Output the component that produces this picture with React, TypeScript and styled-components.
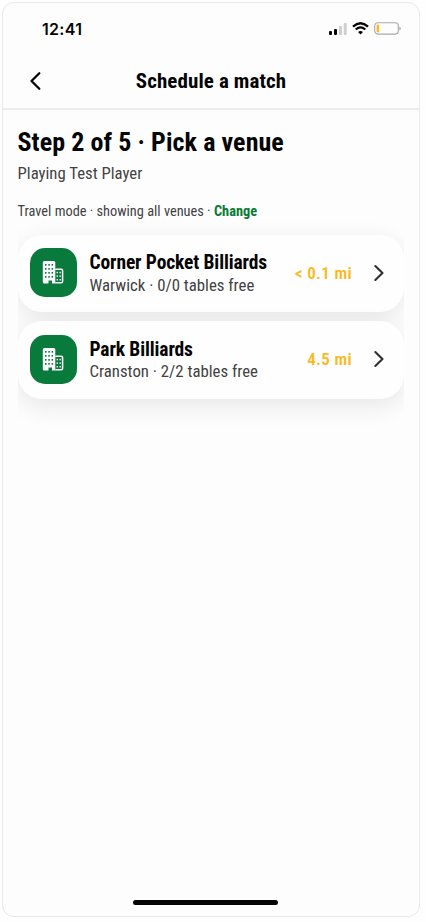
import React from "react";
import styled, { createGlobalStyle } from "styled-components";

const Global = createGlobalStyle`
  * { box-sizing: border-box; }
  body { margin: 0; background: #fefefe; font-family: "Roboto Condensed", Roboto, sans-serif; font-stretch: 75%; color: #050505; }
  h1, h2, h3, p { margin: 0; }
  button { border: 0; padding: 0; background: none; font: inherit; color: inherit; cursor: pointer; }
`;

const Page = styled.div`
  height: 922px;
  padding: 2px 6px 5px 2px;
`;

const Phone = styled.main`
  width: 418px;
  height: 915px;
  border: 1px solid #e9e9e9;
  border-radius: 12px;
  background: #fdfdfd;
  display: flex;
  flex-direction: column;
`;

const StatusBar = styled.div`
  height: 51px;
  padding: 0 18px 0 39px;
  display: flex;
  align-items: center;
  justify-content: space-between;
`;

const Clock = styled.span`
  font: 600 16px/20px Inter, sans-serif;
  letter-spacing: 0.3px;
`;

const StatusIcons = styled.div`
  display: flex;
  align-items: center;
  gap: 5px;
  svg { display: block; }
`;

const NavBar = styled.header`
  height: 56px;
  border-bottom: 2px solid #ececea;
  display: grid;
  grid-template-columns: 64px 1fr 64px;
  align-items: center;
`;

const BackButton = styled.button`
  display: flex;
  padding-left: 26px;
`;

const NavTitle = styled.h1`
  text-align: center;
  font-size: 21px;
  line-height: 26px;
  font-weight: 700;
  letter-spacing: 0.1px;
`;

const Content = styled.section`
  flex: 1;
  padding: 17px 15px 0 14.5px;
`;

const Heading = styled.h2`
  font-size: 26px;
  line-height: 30px;
  font-weight: 700;
  letter-spacing: 0.08px;
  white-space: nowrap;
`;

const Opponent = styled.p`
  margin-top: 6px;
  font-size: 16.75px;
  line-height: 20px;
  color: #424242;
`;

const TravelNote = styled.p`
  margin-top: 21px;
  font-size: 14.35px;
  line-height: 16px;
  color: #424242;
`;

const ChangeLink = styled.button`
  font-weight: 700;
  color: #087a35;
`;

const VenueList = styled.div`
  display: flex;
  flex-direction: column;
  gap: 9px;
  height: 225px;
  padding-top: 14.5px;
  overflow: hidden;
`;

const VenueCard = styled.button`
  flex: none;
  height: 77.5px;
  padding: 0 19px 1px 12px;
  display: flex;
  align-items: center;
  border-radius: 24px;
  background: #fefefe;
  box-shadow: 0 7px 24px rgba(0, 0, 0, 0.09);
  text-align: left;
`;

const VenueIcon = styled.span`
  width: 47.5px;
  height: 49px;
  border-radius: 15px;
  background: #087a3b;
  display: flex;
  align-items: center;
  justify-content: center;
`;

const VenueText = styled.span`
  flex: 1;
  margin-left: 12.5px;
  padding-top: 2px;
  display: flex;
  flex-direction: column;
  white-space: nowrap;
`;

const VenueName = styled.span`
  font-size: 19.5px;
  letter-spacing: -0.12px;
  line-height: 23.5px;
  font-weight: 700;
`;

const VenueDetail = styled.span`
  margin: -1px 0 1px;
  font-size: 16.8px;
  line-height: 22px;
  color: #424242;
`;

const Distance = styled.span`
  margin-right: 21px;
  font-size: 17px;
  line-height: 22px;
  font-weight: 650;
  letter-spacing: 0.35px;
  color: #fbb91d;
`;

const HomeIndicator = styled.div`
  align-self: center;
  width: 145px;
  height: 5px;
  margin: 0 10.5px 11.5px 0;
  border-radius: 3px;
  background: #050505;
`;

const Buildings = () => (
  <svg width="22" height="25" viewBox="0 0 22 25" fill="none">
    <path d="M2.2 1h9.6q1.5 0 1.5 1.5V23.5H10v-3H6.5v3H2.2Q.8 23.5.8 22V2.5Q.8 1 2.2 1Z" fill="#fdfdfd" />
    <path d="M13.3 9.2h5.9q1.4 0 1.4 1.4v11q0 1.2-1.4 1.2h-5.9" stroke="#fdfdfd" strokeWidth="1.5" />
    <g fill="#087a3b">
      {[4, 8, 12, 16].map((y) => [3, 6.3, 9.6].map((x) => <rect key={`${x}-${y}`} x={x} y={y} width="1.5" height="1.7" />))}
    </g>
    <g fill="#fdfdfd">
      {[11.8, 15.4, 19].map((y) => [14.6, 17.5].map((x) => <rect key={`${x}-${y}`} x={x} y={y} width="1.3" height="1.5" />))}
    </g>
  </svg>
);

const Chevron = () => (
  <svg width="12" height="18" viewBox="0 0 12 18" fill="none">
    <path d="M2.3 2l7.2 7-7.2 7" stroke="#303030" strokeWidth="2.1" strokeLinecap="round" strokeLinejoin="round" />
  </svg>
);

const venues = [
  { name: "Corner Pocket Billiards", detail: "Warwick · 0/0 tables free", distance: "< 0.1 mi" },
  { name: "Park Billiards", detail: "Cranston · 2/2 tables free", distance: "4.5 mi" },
];

export default function App() {
  return (
    <Page>
      <Global />
      <Phone>
        <StatusBar>
          <Clock>12:41</Clock>
          <StatusIcons>
            <svg width="18" height="12" viewBox="0 0 18 12">
              <rect x="0" y="8" width="3" height="4" rx="1" fill="#050505" />
              <rect x="5" y="6" width="3" height="6" rx="1" fill="#050505" />
              <rect x="10" y="3" width="3" height="9" rx="1" fill="#cfcfcf" />
              <rect x="14.7" y="0" width="3" height="12" rx="1" fill="#cfcfcf" />
            </svg>
            <svg width="17" height="13" viewBox="0 0 17 13" fill="none" stroke="#050505">
              <path d="M1 4.6Q8.5-2 16 4.6" strokeWidth="2.4" />
              <path d="M3.7 7.5Q8.5 3.2 13.3 7.5" strokeWidth="2.1" />
              <path d="M6 10q2.5-2 5 0l-2.5 2.5Z" fill="#050505" stroke="none" />
            </svg>
            <svg width="27" height="13" viewBox="0 0 27 13">
              <rect x=".7" y=".7" width="23.6" height="11.4" rx="3" fill="none" stroke="#a8a8a8" strokeWidth="1.1" />
              <rect x="2.6" y="2.5" width="2.5" height="8" rx="1" fill="#fbb91d" />
              <path d="M25.3 4.5q1.5.4 1.5 1.9t-1.5 1.9Z" fill="#a8a8a8" />
            </svg>
          </StatusIcons>
        </StatusBar>
        <NavBar>
          <BackButton aria-label="Back">
            <svg width="12" height="20" viewBox="0 0 12 20" fill="none">
              <path d="M10.3 2.2L2.5 10l7.8 7.8" stroke="#050505" strokeWidth="2.3" strokeLinecap="round" strokeLinejoin="round" />
            </svg>
          </BackButton>
          <NavTitle>Schedule a match</NavTitle>
        </NavBar>
        <Content>
          <Heading>Step 2 of 5 · Pick a venue</Heading>
          <Opponent>Playing Test Player</Opponent>
          <TravelNote>
            Travel mode · showing all venues · <ChangeLink>Change</ChangeLink>
          </TravelNote>
          <VenueList>
            {venues.map((v) => (
              <VenueCard key={v.name}>
                <VenueIcon><Buildings /></VenueIcon>
                <VenueText>
                  <VenueName>{v.name}</VenueName>
                  <VenueDetail>{v.detail}</VenueDetail>
                </VenueText>
                <Distance>{v.distance}</Distance>
                <Chevron />
              </VenueCard>
            ))}
          </VenueList>
        </Content>
        <HomeIndicator />
      </Phone>
    </Page>
  );
}
